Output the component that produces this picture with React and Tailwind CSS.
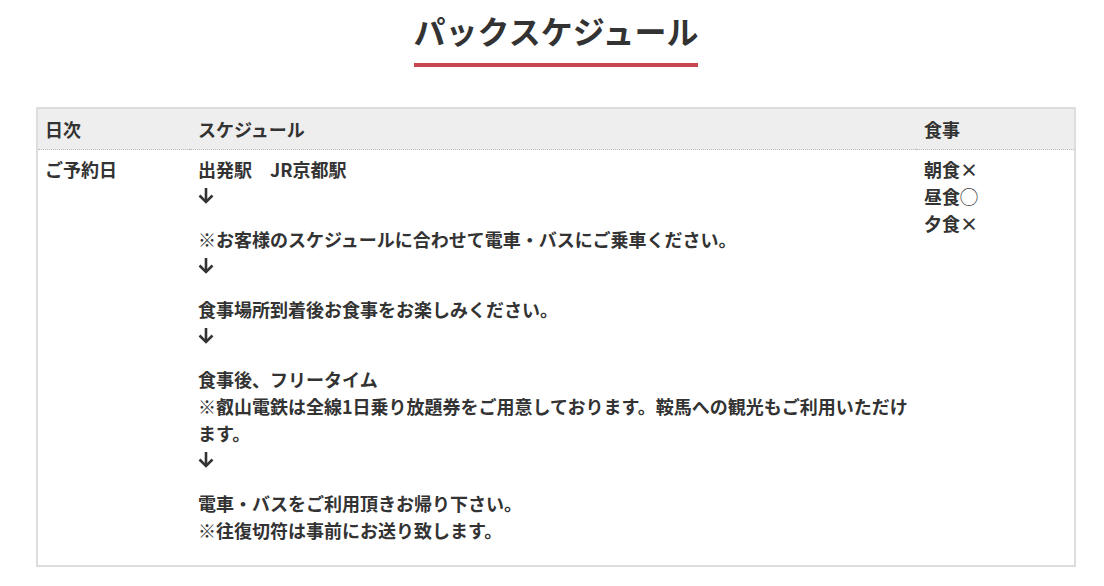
function Arrow() {
  return (
    <span className="flex h-[27px] items-center">
      <svg width="16" height="17" viewBox="0 0 16 17" className="-mt-[2px]" fill="none" stroke="#333" strokeWidth="2.6" strokeLinecap="butt" strokeLinejoin="miter">
        <path d="M8 1v14" />
        <path d="M1.5 8.5L8 15l6.5-6.5" />
      </svg>
    </span>
  );
}

export default function App() {
  const steps = [
    ["出発駅　JR京都駅", "↓"],
    ["※お客様のスケジュールに合わせて電車・バスにご乗車ください。", "↓"],
    ["食事場所到着後お食事をお楽しみください。", "↓"],
    ["食事後、フリータイム", "※叡山電鉄は全線1日乗り放題券をご用意しております。鞍馬への観光もご利用いただけます。", "↓"],
    ["電車・バスをご利用頂きお帰り下さい。", "※往復切符は事前にお送り致します。"],
  ];
  return (
    <div
      className="w-[1104px] min-h-[586px] bg-white text-[#333] font-bold"
      style={{ fontFamily: '"Noto Sans CJK JP", "Noto Sans", sans-serif' }}
    >
      <div className="ml-[36px] w-[1040px] pt-[6px]">
        <div className="flex justify-center">
          <h2 className="inline-block text-[32px] leading-[48px] font-bold pb-[9px] border-b-[4px] border-[#c8464f] text-[#333]">
            パックスケジュール
          </h2>
        </div>
        <table className="mt-[40px] w-[1040px] border-2 border-[#ddd] border-collapse text-[18px] leading-[27px] table-fixed">
          <colgroup>
            <col className="w-[153px]" />
            <col className="w-[726px]" />
            <col />
          </colgroup>
          <thead>
            <tr className="bg-[#eee]">
              <th className="text-left font-bold px-[7px] pt-[7px] pb-[6px] border-b border-dotted border-[#bbb]">日次</th>
              <th className="text-left font-bold px-[8px] pt-[7px] pb-[6px] border-b border-dotted border-[#bbb]">スケジュール</th>
              <th className="text-left font-bold px-[8px] pt-[7px] pb-[6px] border-b border-dotted border-[#bbb]">食事</th>
            </tr>
          </thead>
          <tbody>
            <tr className="align-top">
              <td className="px-[7px] pt-[6px] pb-[5px]">ご予約日</td>
              <td className="px-[8px] pt-[6px] pb-[5px]">
                {steps.map((lines, i) => (
                  <p key={i} className="mb-[16px]">
                    {lines.map((l, j) =>
                      l === "↓" ? (
                        <Arrow key={j} />
                      ) : (
                        <span key={j} className="block">{l}</span>
                      )
                    )}
                  </p>
                ))}
              </td>
              <td className="px-[8px] pt-[6px] pb-[5px]">
                <span className="block">朝食×</span>
                <span className="block">昼食◯</span>
                <span className="block">夕食×</span>
              </td>
            </tr>
          </tbody>
        </table>
      </div>
    </div>
  );
}
